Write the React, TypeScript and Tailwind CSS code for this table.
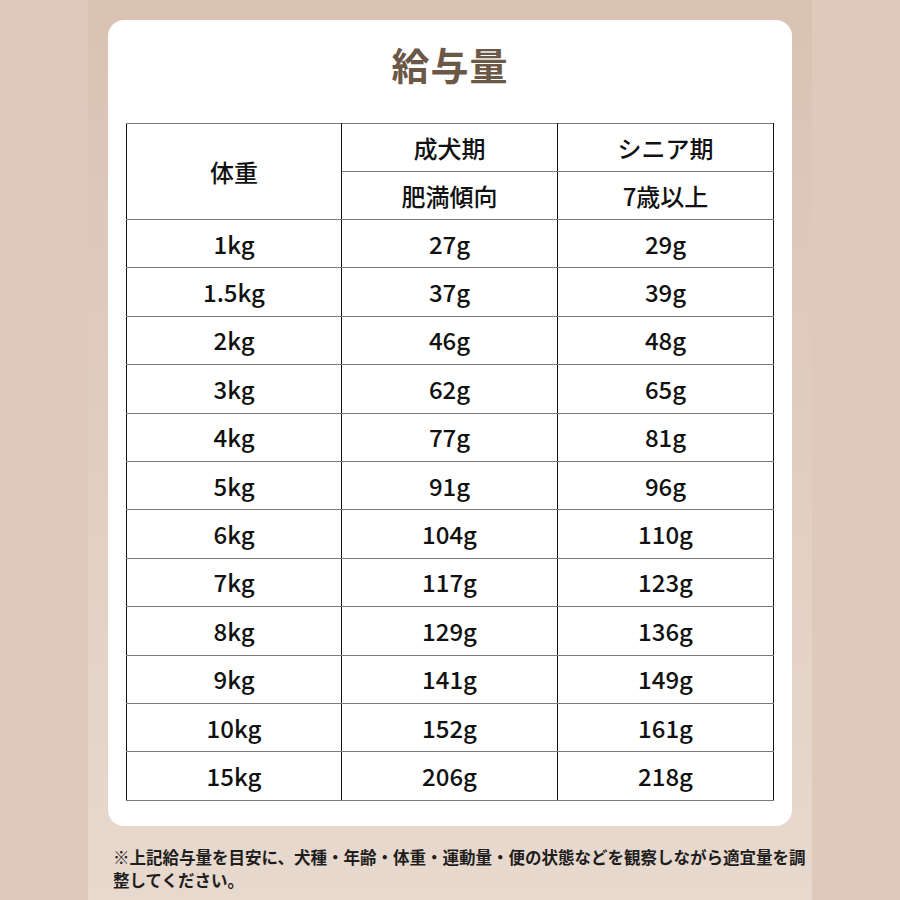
import React from "react";

const rows: [string, string, string][] = [
  ["1kg", "27g", "29g"],
  ["1.5kg", "37g", "39g"],
  ["2kg", "46g", "48g"],
  ["3kg", "62g", "65g"],
  ["4kg", "77g", "81g"],
  ["5kg", "91g", "96g"],
  ["6kg", "104g", "110g"],
  ["7kg", "117g", "123g"],
  ["8kg", "129g", "136g"],
  ["9kg", "141g", "149g"],
  ["10kg", "152g", "161g"],
  ["15kg", "206g", "218g"],
];

const cell =
  "border-y-[1.5px] border-y-[#7a7a7a] border-x border-x-[#111] text-center align-middle p-0";

export default function App() {
  return (
    <div
      className="w-[900px] h-[900px] bg-[#dfc9bb] flex justify-center overflow-hidden"
      style={{ fontFamily: '"Noto Sans CJK JP", "Noto Sans", sans-serif' }}
    >
      <div className="w-[724px] h-[900px] bg-gradient-to-b from-[#dac2b2] to-[#e8d9ce] px-[20px] pt-[20px]">
        <div className="bg-white rounded-[16px] h-[806px] px-[18px] pt-[19px] flex flex-col">
          <h1 className="text-center text-[38px] leading-[50px] font-bold text-[#6b5846] tracking-[1px]">
            給与量
          </h1>
          <table className="mt-[34px] w-[647px] border-collapse text-[#111] text-[24px] font-medium table-fixed">
            <colgroup>
              <col className="w-[215px]" />
              <col className="w-[216px]" />
              <col className="w-[216px]" />
            </colgroup>
            <tbody>
              <tr className="h-[48px]">
                <td rowSpan={2} className={cell}>
                  体重
                </td>
                <td className={cell}>成犬期</td>
                <td className={cell}>シニア期</td>
              </tr>
              <tr className="h-[48px]">
                <td className={cell}>肥満傾向</td>
                <td className={cell}>7歳以上</td>
              </tr>
              {rows.map((r) => (
                <tr key={r[0]} className="h-[48.4px]">
                  <td className={cell}>{r[0]}</td>
                  <td className={cell}>{r[1]}</td>
                  <td className={cell}>{r[2]}</td>
                </tr>
              ))}
            </tbody>
          </table>
        </div>
        <p className="mt-[20px] pl-[5px] w-[700px] text-[16.5px] leading-[23px] font-bold text-[#1e1e1e]">
          ※上記給与量を目安に、犬種・年齢・体重・運動量・便の状態などを観察しながら適宜量を調整してください。
        </p>
      </div>
    </div>
  );
}
